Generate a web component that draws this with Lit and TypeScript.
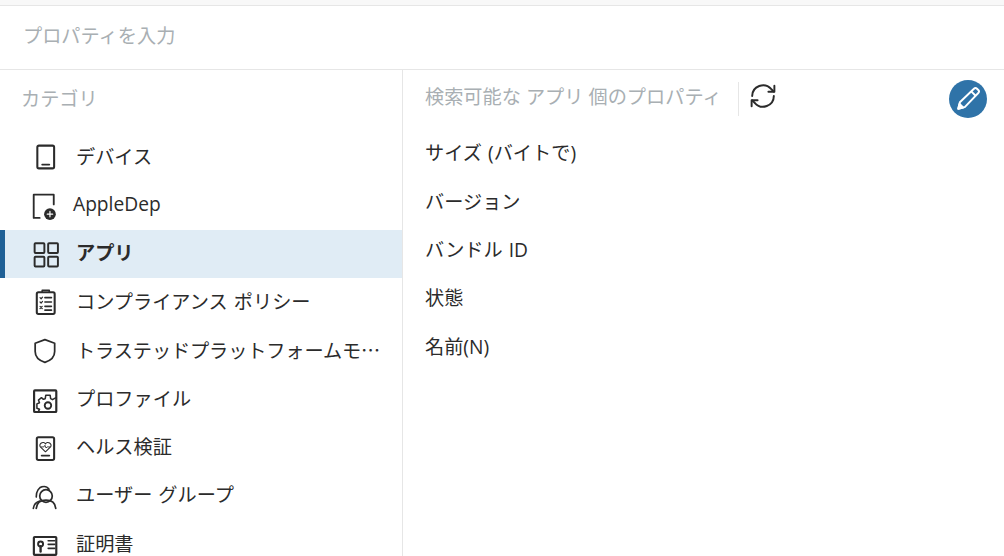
import { LitElement, html, css, svg } from "lit";
import { customElement } from "lit/decorators.js";

const ic = (body: unknown) => html`<svg width="26" height="26" viewBox="0 0 24 24" fill="none" stroke="#2b2b2b" stroke-width="1.5" stroke-linecap="round" stroke-linejoin="round" overflow="visible">${body}</svg>`;

const icons = {
  device: svg`<rect x="4" y="1.500" width="15.500" height="21" rx="1.500" stroke-width="1.900"/><path d="M8.500 19h6.500" stroke-width="1.700"/>`,
  apple: svg`<path d="M8 23H2.500V1.500h18.500v9" stroke-width="1.700"/><circle cx="17.500" cy="19.500" r="5.400" fill="#2b2b2b" stroke="none"/><path d="M17.500 17v5M15 19.500h5" stroke="#fff" stroke-width="1.100"/>`,
  apps: svg`<rect x="1.500" y="2" width="9" height="9" rx=".8" stroke-width="1.800"/><rect x="14" y="2" width="9" height="9" rx=".8" stroke-width="1.800"/><rect x="1.500" y="14.500" width="9" height="9" rx=".8" stroke-width="1.800"/><rect x="14" y="14.500" width="9" height="9" rx=".8" stroke-width="1.800"/>`,
  policy: svg`<rect x="3.500" y="3" width="16.500" height="20" rx="1.500" stroke-width="1.900"/><path d="M8.500 3V1.200h6.500V3" stroke-width="1.500"/><path d="M11 8h6M11 12h6M11 16h6M11 19.500h6" stroke-width="1.500"/><path d="M6.500 8l1 1 1.300-1.500M6.500 12l1 1 1.300-1.500M6.500 16l2 2M8.500 16l-2 2" stroke-width="1.100"/>`,
  shield: svg`<path d="M11 1.500 20 4.800v7.700c0 5-3.600 8.300-9 10-5.400-1.700-9-5-9-10V4.800z" stroke-width="1.600"/>`,
  profile: svg`<rect x="1" y="4" width="20.500" height="20" rx=".8" stroke-width="2"/><path d="M5 23.500 6 21.500 3.600 20.500V16.500L6 15.500 5 13 7.800 10.800 9.600 12.300 11.300 11.700 11.800 8.500h4L16.300 11.700 18 12.600 20.800 11" stroke-width="1.400"/><circle cx="13.800" cy="18" r="3" stroke-width="1.700"/>`,
  health: svg`<rect x="3.500" y="2" width="16" height="21" rx="1.500" stroke-width="1.900"/><path d="M11.500 15.500 6.800 11c-2-2.800 2.700-6 4.700-2.800 2-3.200 6.700 0 4.700 2.800z" stroke-width="1"/><path d="M7.500 11h2.500l1-1.500 1 2.500 1-1h2.500" stroke-width=".8"/><path d="M8 19h7" stroke-width="1.700"/>`,
  users: svg`<circle cx="12" cy="12" r="5.800" stroke-width="1.600"/><path d="M3 12.900C2.500 8 6 3.400 8.600 3.400c2.500-.6 4.800.4 6.200 2.400" stroke-width="1.500"/><path d="M3 23.400C3.500 18 7.500 15.800 12 15.800s8.500 2.200 9 7.600" stroke-width="1.600"/><path d="M.3 23.400C.8 20 3 17.500 6.200 16.600" stroke-width="1.500"/>`,
  cert: svg`<rect x=".8" y="5.500" width="20.700" height="16.500" rx=".8" stroke-width="2"/><circle cx="7" cy="12" r="2.300" fill="none" stroke-width="1.800"/><path d="M7 14v5" stroke-width="2.200"/><path d="M14 9h6M14 12.300h6M14 16h6" stroke-width="1.500"/>`,
};

const items: [unknown, string][] = [
  [icons.device, "デバイス"],
  [icons.apple, "AppleDep"],
  [icons.apps, "アプリ"],
  [icons.policy, "コンプライアンス ポリシー"],
  [icons.shield, "トラステッドプラットフォームモ…"],
  [icons.profile, "プロファイル"],
  [icons.health, "ヘルス検証"],
  [icons.users, "ユーザー グループ"],
  [icons.cert, "証明書"],
];

@customElement("app-root")
export class AppRoot extends LitElement {
  static styles = css`
    :host {
      display: flex;
      flex-direction: column;
      height: 556px;
      overflow: hidden;
      background: #fff;
      color: #2b2b2b;
      font-family: "Open Sans", "Noto Sans CJK JP", sans-serif;
      font-size: 19.2px;
      word-spacing: 1px;
    }
    .strip { height: 5px; flex: none; background: #f8f8f8; border-bottom: 1px solid #e6e6e6; }
    .search {
      flex: none; height: 64px; padding: 0 0 6px 23px; box-sizing: border-box; display: flex; align-items: center;
      color: #a9afb3; border-bottom: 1px solid #e6e6e6;
    }
    .body { flex: 1; display: flex; min-height: 0; }
    .side { width: 402px; flex: none; border-right: 1px solid #e6e6e6; display: flex; flex-direction: column; }
    .cat { flex: none; height: 63px; padding: 11px 0 0 21px; box-sizing: border-box; color: #a9afb3; line-height: 36px; }
    .row {
      flex: none; height: 48.4px; display: flex; align-items: center; padding-left: 33px; gap: 17px;
      box-sizing: border-box;
    }
    .row svg { flex: none; display: block; }
    .row.on { background: #e0ecf5; border-left: 5px solid #1f6096; padding-left: 28px; font-weight: 700; }
    .row.apple { padding-left: 31px; gap: 16px; }
    .row.apple span { padding-bottom: 4px; }
    .row span { white-space: nowrap; line-height: 30px; padding-bottom: 1px; }
    .row .cjk { font-family: "Noto Sans CJK JP", sans-serif; letter-spacing: -0.12px; }
    .main { flex: 1; position: relative; padding: 8px 0 0 22px; min-width: 0; }
    .head { display: flex; align-items: center; height: 36px; color: #a9afb3; word-spacing: 0; }
    .sep { width: 1px; height: 34px; background: #e6e6e6; margin: 6px 11px 0 16px; }
    .refresh { display: block; }
    .edit {
      position: absolute; right: 17px; top: 10px; width: 38px; height: 38px; border-radius: 50%;
      background: #2f73a8; display: flex; align-items: center; justify-content: center;
    }
    .props { padding-top: 14px; display: flex; flex-direction: column; }
    .prop { height: 48.4px; display: flex; align-items: center; }
  `;

  render() {
    return html`
      <div class="strip"></div>
      <div class="search">プロパティを入力</div>
      <div class="body">
        <div class="side">
          <div class="cat">カテゴリ</div>
          ${items.map(([ico, label], i) => html`
            <div class="row ${i === 2 ? "on" : ""} ${i === 1 ? "apple" : ""}">
              ${ic(ico)}
              <span class=${i === 4 ? "cjk" : ""}>${label}</span>
            </div>`)}
        </div>
        <div class="main">
          <div class="head">
            <span>検索可能な アプリ 個のプロパティ</span>
            <div class="sep"></div>
            <svg class="refresh" width="26" height="26" viewBox="0 0 24 24" fill="none" stroke="#2b2b2b" stroke-width="1.800" stroke-linecap="round" stroke-linejoin="round">
              <path d="M2 12a10 10 0 0 1 17.500-6.500L22 8"/><path d="M22.500 2.500V8H17"/>
              <path d="M22 12a10 10 0 0 1-17.500 6.500L2 16"/><path d="M1.500 21.500V16H7"/>
            </svg>
          </div>
          <div class="edit">
            <svg width="26" height="26" viewBox="0 0 24 24" fill="none" stroke="#fff" stroke-width="1.800" stroke-linejoin="round">
              <path d="M3 21l1.500-6L17.500 2.500a2 2 0 0 1 2.800 0l1.200 1.200a2 2 0 0 1 0 2.800L9 19.500z"/>
              <path d="M15 5l4 4"/><path d="M3 21l1.200-4.500 3.300 3.300z" fill="#fff"/>
            </svg>
          </div>
          <div class="props">
            ${["サイズ (バイトで)", "バージョン", "バンドル ID", "状態", "名前(N)"].map((p) => html`<div class="prop">${p}</div>`)}
          </div>
        </div>
      </div>
    `;
  }
}
